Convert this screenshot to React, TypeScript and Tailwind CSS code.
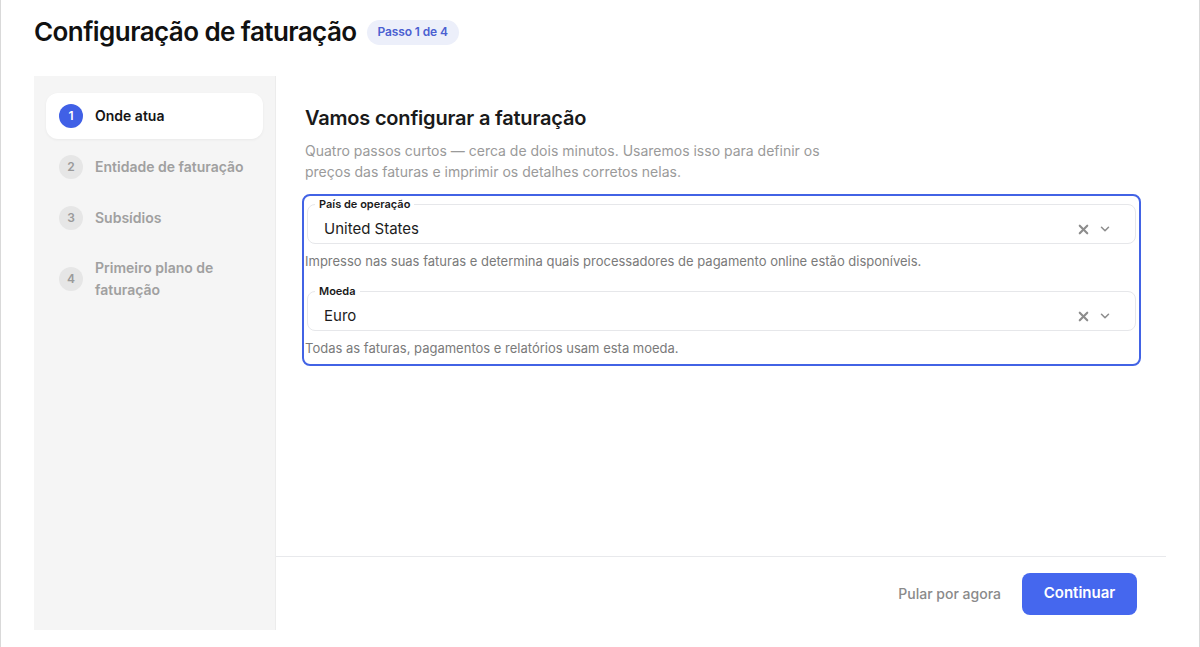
import { X, ChevronDown } from "lucide-react"

const steps = [
  { n: 1, label: "Onde atua" },
  { n: 2, label: "Entidade de faturação" },
  { n: 3, label: "Subsídios" },
  { n: 4, label: "Primeiro plano de faturação" },
]

function Step({ n, label, active }: { n: number; label: string; active: boolean }) {
  return (
    <div
      className={`flex items-center gap-3 rounded-xl px-[13px] py-[11px] ${active ? "bg-white shadow-[0_1px_3px_rgba(0,0,0,0.05)]" : ""}`}
    >
      <div
        className={`flex h-6 w-6 shrink-0 items-center justify-center rounded-full text-[12px] font-semibold ${active ? "bg-[#4060e6] text-white" : "bg-[#e6e6e6] text-[#9a9a9a]"}`}
      >
        {n}
      </div>
      <span className={`text-[14px] font-semibold leading-[22px] ${active ? "text-[#151515]" : "text-[#a0a0a0]"}`}>
        {label}
      </span>
    </div>
  )
}

function SelectField({ label, value }: { label: string; value: string }) {
  return (
    <fieldset className="mx-[2px] rounded-lg border border-[#e6e7ea] px-[7px]">
      <legend className="px-1 text-[11px] font-semibold leading-[14px] text-[#1a1a1a]">{label}</legend>
      <div className="flex h-[32px] items-center pt-1 pl-[9px] pr-[16px]">
        <span className="flex-1 text-[15px] text-[#1c1c1c]">{value}</span>
        <div className="flex items-center gap-[7px] text-[#8d8d8d]">
          <X size={15} strokeWidth={3.4} />
          <ChevronDown size={14} strokeWidth={2.6} />
        </div>
      </div>
    </fieldset>
  )
}

export default function App() {
  return (
    <div className="h-[647px] overflow-hidden border-x border-[#d9d9d9] bg-white px-[33px] pt-4 font-['Inter',sans-serif]">
      <div className="flex items-center gap-[10px]">
        <h1 className="text-[26px] font-semibold leading-[32px] tracking-[-0.022em] text-[#111]">
          Configuração de faturação
        </h1>
        <span className="flex h-[25px] items-center rounded-full bg-[#eceffa] px-[11px] text-[12px] font-semibold tracking-[-0.01em] text-[#4b5fd1]">
          Passo 1 de 4
        </span>
      </div>

      <div className="mt-[28px] flex h-[554px]">
        <aside className="flex w-[242px] shrink-0 flex-col gap-[5px] border-r border-[#ececec] bg-[#f5f5f5] px-3 pt-[17px]">
          {steps.map((s) => (
            <Step key={s.n} n={s.n} label={s.label} active={s.n === 1} />
          ))}
        </aside>

        <main className="flex flex-1 flex-col">
          <div className="flex-1 pl-[29px] pr-[28px] pt-[28px]">
            <h2 className="text-[20px] font-semibold leading-[28px] tracking-[-0.01em] text-[#1a1a1a]">
              Vamos configurar a faturação
            </h2>
            <p className="mt-2 max-w-[530px] text-[14px] leading-[21px] text-[#9a9a9a]">
              Quatro passos curtos — cerca de dois minutos. Usaremos isso para definir os preços das faturas e imprimir os detalhes corretos nelas.
            </p>

            <div className="mt-[15px] rounded-[5px] pb-[6px] outline-2 outline-offset-1 outline-[#4263e5]">
              <SelectField label="País de operação" value="United States" />
              <p className="mt-2 text-[13px] leading-[18px] text-[#7a7a7a]">
                Impresso nas suas faturas e determina quais processadores de pagamento online estão disponíveis.
              </p>
              <div className="mt-[14px]">
                <SelectField label="Moeda" value="Euro" />
              </div>
              <p className="mt-2 text-[13px] leading-[18px] text-[#7a7a7a]">
                Todas as faturas, pagamentos e relatórios usam esta moeda.
              </p>
            </div>
          </div>

          <div className="flex h-[74px] items-center justify-end gap-[21px] border-t border-[#e8e9ec] pr-[29px]">
            <button className="text-[14px] font-medium text-[#8a8a8a]">Pular por agora</button>
            <button className="h-[42px] w-[115px] rounded-lg bg-[#4567ee] text-[15px] font-semibold text-white">
              Continuar
            </button>
          </div>
        </main>
      </div>
    </div>
  )
}
